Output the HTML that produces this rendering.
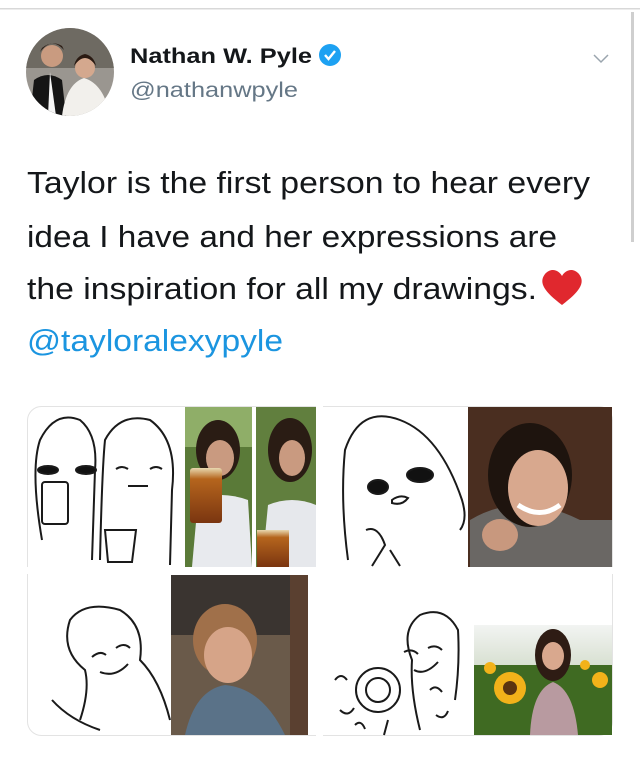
<!DOCTYPE html>
<html><head><meta charset="utf-8"><style>
html,body{margin:0;padding:0;background:#fff;width:640px;height:773px;overflow:hidden;font-family:"Liberation Sans",sans-serif}
</style></head><body>
<svg width="640" height="773" viewBox="0 0 640 773" xmlns="http://www.w3.org/2000/svg" style="display:block">
<defs>
<clipPath id="av"><circle cx="70" cy="72" r="44"/></clipPath>
<linearGradient id="beer" x1="0" y1="0" x2="0" y2="1"><stop offset="0" stop-color="#e8d8b0"/><stop offset="0.2" stop-color="#b5651d"/><stop offset="1" stop-color="#7a3510"/></linearGradient>
<linearGradient id="sky" x1="0" y1="0" x2="0" y2="1"><stop offset="0" stop-color="#f2f4f2"/><stop offset="0.5" stop-color="#cfd9c6"/><stop offset="1" stop-color="#4f6e2a"/></linearGradient>
</defs>
<rect x="0" y="8" width="640" height="1.5" fill="#d8d8d8"/>
<rect x="631" y="12" width="3" height="230" fill="#cfcfcf"/>
<!-- avatar -->
<g clip-path="url(#av)">
<rect x="26" y="28" width="88" height="88" fill="#9a9690"/>
<rect x="26" y="28" width="88" height="40" fill="#6e6a62"/>
<path d="M30 116 L34 80 Q48 70 62 80 L66 116Z" fill="#151515"/>
<circle cx="52" cy="56" r="11" fill="#c99b80"/>
<path d="M40 52 Q52 36 64 50 L62 46 Q52 40 42 48Z" fill="#2a1a12"/>
<path d="M62 116 Q66 84 84 78 Q104 84 110 116Z" fill="#f2f0ec"/>
<circle cx="85" cy="68" r="10" fill="#d4a88e"/>
<path d="M74 66 Q85 50 96 66 Q94 56 85 54 Q76 56 74 66Z" fill="#2a1a12"/>
<path d="M50 72 L56 116 L48 116Z" fill="#f5f5f5"/>
</g>
<text x="130" y="63" font-size="21.5" font-weight="bold" fill="#14171a" textLength="182" lengthAdjust="spacingAndGlyphs">Nathan W. Pyle</text>
<g transform="translate(330,55)">
<circle r="11" fill="#1da1f2"/>
<path d="M-5 0 L-1.5 4 L5 -4" stroke="#fff" stroke-width="2.4" fill="none"/>
</g>
<text x="130" y="97" font-size="21" fill="#657786" textLength="168" lengthAdjust="spacingAndGlyphs">@nathanwpyle</text>
<path d="M594 55 L601 62 L608 55" stroke="#9aa5ae" stroke-width="1.5" fill="none"/>
<!-- tweet text -->
<g font-size="31" fill="#14171a">
<text x="27" y="193" textLength="563" lengthAdjust="spacingAndGlyphs">Taylor is the first person to hear every</text>
<text x="27" y="247" textLength="530" lengthAdjust="spacingAndGlyphs">idea I have and her expressions are</text>
<text x="27" y="299" textLength="510" lengthAdjust="spacingAndGlyphs">the inspiration for all my drawings.</text>
<text x="27" y="351" textLength="256" lengthAdjust="spacingAndGlyphs" fill="#1b95e0">@tayloralexypyle</text>
</g>
<path d="M562 305 C545 292 538 283 545 274 C551 267 559 270 562 276 C565 270 573 267 579 274 C586 283 579 292 562 305Z" fill="#e0282e"/>
<!-- grid -->
<rect x="27.5" y="406.5" width="585" height="329" rx="14" fill="#fff" stroke="#e3e3e3"/>
<rect x="316" y="406" width="7" height="330" fill="#fff"/>
<rect x="27" y="567" width="586" height="7" fill="#fff"/>
<g fill="none" stroke="#1a1a1a" stroke-width="2">
<!-- TL drawing -->
<path d="M42 540 Q30 470 40 440 Q55 410 80 420 Q98 435 95 470 L92 560"/>
<path d="M100 560 Q102 470 105 440 Q120 412 150 420 Q178 440 172 490 L170 565"/>
<ellipse cx="48" cy="470" rx="10" ry="4" fill="#111"/><ellipse cx="86" cy="470" rx="10" ry="4" fill="#111"/>
<path d="M116 469 Q122 465 128 469 M150 469 Q156 465 162 469 M128 486 L148 486"/>
<rect x="42" y="482" width="26" height="42" rx="3"/>
<path d="M105 530 L136 530 L132 562 L108 562Z"/>
<!-- TR drawing -->
<path d="M348 560 Q340 500 345 450 Q360 405 400 420 Q440 435 462 500 Q468 520 460 530"/>
<ellipse cx="378" cy="487" rx="10" ry="7" fill="#111"/><ellipse cx="420" cy="475" rx="13" ry="7" fill="#111"/>
<path d="M392 500 Q400 494 408 498 Q402 506 392 503Z"/>
<path d="M366 530 Q378 525 385 545 L372 566 M390 550 L400 566"/>
<!-- BL drawing -->
<path d="M80 720 Q90 690 85 670 Q60 650 70 620 Q85 600 120 610 Q145 625 140 660 Q160 680 170 720"/>
<path d="M52 700 Q70 720 100 730"/>
<path d="M92 657 Q100 650 106 655 M116 648 Q124 642 130 648 M100 672 Q115 678 128 664"/>
<!-- BR drawing -->
<path d="M420 730 Q410 690 412 660 Q400 630 420 615 Q445 605 458 630 Q460 665 455 700"/>
<path d="M404 652 Q412 648 418 654 M428 648 Q436 644 442 650 M414 670 Q425 676 438 662"/>
<circle cx="378" cy="690" r="12"/><circle cx="378" cy="690" r="22"/>
<path d="M335 680 q6 -8 12 0 M340 710 q8 8 14 -2 M355 725 q6 -6 10 4 M430 690 q6 -6 12 2 M436 715 q8 6 12 -4 M388 720 l-4 15"/>
</g>
<!-- photos -->
<rect x="185" y="407" width="67" height="160" fill="#5a7a38"/>
<rect x="185" y="407" width="67" height="40" fill="#8fae68"/>
<ellipse cx="218" cy="450" rx="22" ry="30" fill="#2a1c14"/>
<ellipse cx="220" cy="458" rx="14" ry="18" fill="#c99a80"/>
<path d="M198 500 Q220 490 248 500 L252 567 L192 567Z" fill="#e8eaee"/>
<rect x="190" y="468" width="32" height="55" rx="3" fill="url(#beer)"/>
<rect x="256" y="407" width="60" height="160" fill="#617f3e"/>
<ellipse cx="290" cy="450" rx="22" ry="32" fill="#2a1c14"/>
<ellipse cx="292" cy="458" rx="13" ry="18" fill="#c99a80"/>
<path d="M268 505 Q292 495 316 505 L316 567 L262 567Z" fill="#e6e8ec"/>
<rect x="257" y="530" width="32" height="37" fill="url(#beer)"/>
<rect x="468" y="407" width="144" height="160" fill="#4a2e20"/>
<path d="M470 567 L470 520 Q520 490 580 520 L612 520 L612 567Z" fill="#6a6764"/>
<ellipse cx="530" cy="475" rx="42" ry="52" fill="#1e140e"/>
<ellipse cx="538" cy="488" rx="30" ry="38" fill="#d8a88e"/>
<path d="M518 505 Q540 520 560 505" stroke="#fff" stroke-width="5" fill="none"/>
<ellipse cx="500" cy="535" rx="18" ry="16" fill="#c8987e"/>
<rect x="171" y="575" width="137" height="160" fill="#6a5a4a"/>
<rect x="171" y="575" width="137" height="60" fill="#3a3430"/>
<rect x="290" y="575" width="18" height="160" fill="#5a4030"/>
<ellipse cx="225" cy="640" rx="32" ry="36" fill="#a0704a"/>
<ellipse cx="228" cy="655" rx="24" ry="28" fill="#d6a488"/>
<path d="M185 735 Q195 690 225 685 Q262 688 285 735Z" fill="#5a7288"/>
<rect x="474" y="625" width="138" height="110" fill="url(#sky)"/>
<rect x="474" y="665" width="138" height="70" fill="#3f6a22"/>
<circle cx="510" cy="688" r="16" fill="#f2b21a"/><circle cx="510" cy="688" r="7" fill="#5a3410"/>
<circle cx="490" cy="668" r="6" fill="#f2b21a"/><circle cx="600" cy="680" r="8" fill="#f2b21a"/><circle cx="585" cy="665" r="5" fill="#f2b21a"/>
<ellipse cx="553" cy="655" rx="18" ry="26" fill="#2e1c14"/>
<ellipse cx="553" cy="656" rx="11" ry="14" fill="#d9a88e"/>
<path d="M530 735 Q532 690 553 682 Q574 690 578 735Z" fill="#b89aa0"/>
</svg>
</body></html>
